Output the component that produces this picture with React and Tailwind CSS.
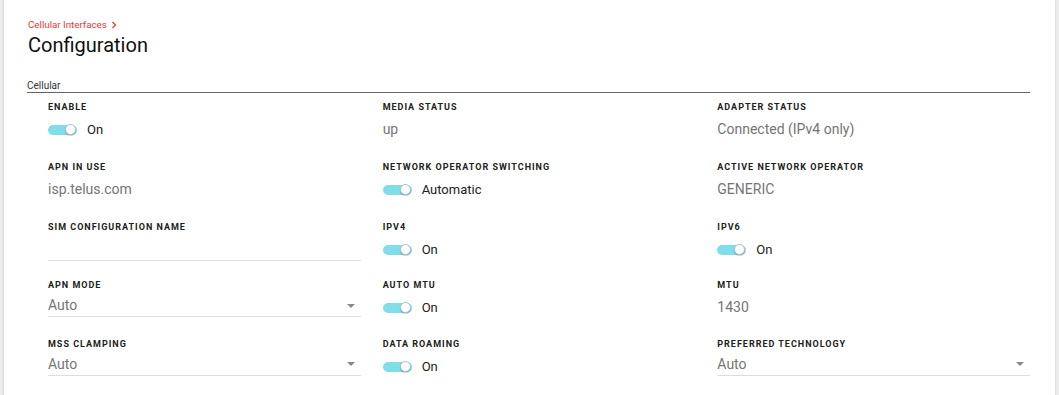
import React from 'react';

const font = { fontFamily: 'Roboto, "Liberation Sans", sans-serif' };

function Label({ children }) {
    return <div className="text-[9px] font-bold tracking-[0.11em] uppercase text-[#212121] leading-[12px]">{children}</div>;
}

function Toggle({ text }) {
    return (
        <div className="flex items-center mt-[11px] h-[12px]">
            <div className="relative w-[29px] h-[10px] rounded-full bg-[#80deea]">
                <div className="absolute right-[1px] top-[-1px] w-[11px] h-[11px] rounded-full bg-white border border-[#b0bec5] shadow-[0_1px_1px_rgba(0,0,0,0.2)]" />
            </div>
            <span className="ml-[10px] text-[13px] text-[#212121]">{text}</span>
        </div>
    );
}

function Value({ children }) {
    return <div className="mt-[8px] text-[14px] leading-[16px] text-[#757575]">{children}</div>;
}

function Select({ value }) {
    return (
        <div className="mt-[4px] flex items-center justify-between h-[22px] border-b border-[#dddddd]">
            <span className="text-[14px] text-[#757575]">{value}</span>
            <svg width="8" height="4" viewBox="0 0 8 4" className="mr-[6px]">
                <path d="M0 0 L8 0 L4 4 Z" fill="#888888" />
            </svg>
        </div>
    );
}

function Cell({ label, children, h }) {
    return (
        <div className={`pr-[22px] ${h}`}>
            <Label>{label}</Label>
            {children}
        </div>
    );
}

export default function App() {
    const rows = [
        ['h-[60px]', [
            { label: 'Enable', body: <Toggle text="On" /> },
            { label: 'Media Status', body: <Value>up</Value> },
            { label: 'Adapter Status', body: <Value>Connected (IPv4 only)</Value> },
        ]],
        ['h-[59.5px]', [
            { label: 'APN in use', body: <Value>isp.telus.com</Value> },
            { label: 'Network Operator Switching', body: <Toggle text="Automatic" /> },
            { label: 'Active Network Operator', body: <Value>GENERIC</Value> },
        ]],
        ['h-[58.5px]', [
            { label: 'SIM Configuration Name', body: <div className="mt-[4px] h-[24px] border-b border-[#dddddd]" /> },
            { label: 'IPv4', body: <Toggle text="On" /> },
            { label: 'IPv6', body: <Toggle text="On" /> },
        ]],
        ['h-[58.5px]', [
            { label: 'APN Mode', body: <Select value="Auto" /> },
            { label: 'Auto MTU', body: <Toggle text="On" /> },
            { label: 'MTU', body: <Value>1430</Value> },
        ]],
        ['h-[59px]', [
            { label: 'MSS Clamping', body: <Select value="Auto" /> },
            { label: 'Data Roaming', body: <Toggle text="On" /> },
            { label: 'Preferred Technology', body: <Select value="Auto" /> },
        ]],
    ];

    return (
        <div className="w-[1059px] h-[395px] bg-[#eeeeee] pl-[3px] pr-[4px] overflow-hidden" style={font}>
            <div className="bg-white h-[400px] pl-[23px] pr-[25px] pt-[19px] border-l border-[#e0e0e0] shadow-[0_0_2px_rgba(0,0,0,0.15)]">
                <div className="flex items-center text-[9.75px] leading-[12px] text-[#e53935] pl-[1px]">
                    Cellular Interfaces
                    <svg width="8" height="8" viewBox="0 0 8 8" className="ml-[3px]">
                        <path d="M2.5 1 L5.5 4 L2.5 7" stroke="#e53935" strokeWidth="1.2" fill="none" />
                    </svg>
                </div>
                <h1 className="mt-[2px] pl-[1px] text-[20px] leading-[24px] text-[#111111]">Configuration</h1>
                <div className="mt-[23px] border-b border-[#666666] text-[10px] leading-[12px] text-[#333333]">Cellular</div>
                <div className="pl-[21px] mr-[-22px] pt-[8px]">
                    {rows.map(([h, cells], i) => (
                        <div key={i} className="grid grid-cols-3">
                            {cells.map((c) => (
                                <Cell key={c.label} label={c.label} h={h}>{c.body}</Cell>
                            ))}
                        </div>
                    ))}
                </div>
            </div>
        </div>
    );
}
